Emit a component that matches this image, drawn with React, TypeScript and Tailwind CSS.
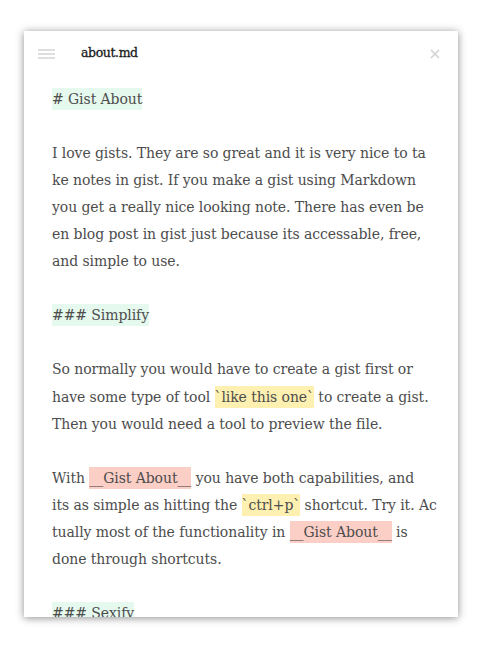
import { X } from "lucide-react";

type Seg = { t: string; k?: "h" | "code" | "bold" };

const lines: Seg[][] = [
   [{ t: "# Gist About", k: "h" }],
   [],
   [{ t: "I love gists. They are so great and it is very nice to ta" }],
   [{ t: "ke notes in gist. If you make a gist using Markdown" }],
   [{ t: "you get a really nice looking note. There has even be" }],
   [{ t: "en blog post in gist just because its accessable, free," }],
   [{ t: "and simple to use." }],
   [],
   [{ t: "### Simplify", k: "h" }],
   [],
   [{ t: "So normally you would have to create a gist first or" }],
   [{ t: "have some type of tool " }, { t: "`like this one`", k: "code" }, { t: " to create a gist." }],
   [{ t: "Then you would need a tool to preview the file." }],
   [],
   [{ t: "With " }, { t: "__Gist About__", k: "bold" }, { t: " you have both capabilities, and" }],
   [{ t: "its as simple as hitting the " }, { t: "`ctrl+p`", k: "code" }, { t: " shortcut. Try it. Ac" }],
   [{ t: "tually most of the functionality in " }, { t: "__Gist About__", k: "bold" }, { t: " is" }],
   [{ t: "done through shortcuts." }],
   [],
   [{ t: "### Sexify", k: "h" }],
];

const segClass = {
   h: "bg-[#e6f9ee] py-[3px]",
   code: "bg-[#fdf0b0] py-[3px]",
   bold: "bg-[#fccfc6] py-[3px]",
};

function App() {
   return (
      <div className="w-[480px] h-[650px] bg-white relative">
         <div className="absolute left-[24px] top-[31px] w-[434px] h-[586px] bg-white shadow-[0_1px_8px_rgba(0,0,0,0.45)] overflow-hidden">
            {/* header */}
            <div className="h-[44px] flex items-center pl-[14px] pr-[16px] pt-[1px]">
               <div className="flex flex-col gap-[2px] w-[17px]">
                  <span className="h-[2px] bg-[#dedede]" />
                  <span className="h-[2px] bg-[#dedede]" />
                  <span className="h-[2px] bg-[#dedede]" />
               </div>
               <span
                  className="ml-[26px] text-[12.5px] text-[#1a1a1a] tracking-[-0.4px]"
                  style={{ fontFamily: '"DejaVu Serif", serif', WebkitTextStroke: "0.3px #1a1a1a" }}
               >
                  about.md
               </span>
               <X className="ml-auto w-[14px] h-[14px] text-[#d4d4d4]" strokeWidth={3} />
            </div>

            {/* editor */}
            <div
               className="pl-[28px] pt-[10.5px] text-[14px] leading-[27.1px] text-[#4d4d4d] tracking-[-0.08px]"
               style={{ fontFamily: '"DejaVu Serif", serif' }}
            >
               {lines.map((line, i) => (
                  <div key={i} className="h-[27.1px] whitespace-pre">
                     {line.map((s, j) => (
                        <span key={j} className={s.k ? segClass[s.k] : ""}>
                           {s.t}
                        </span>
                     ))}
                  </div>
               ))}
            </div>
         </div>
      </div>
   );
}

export default App;
